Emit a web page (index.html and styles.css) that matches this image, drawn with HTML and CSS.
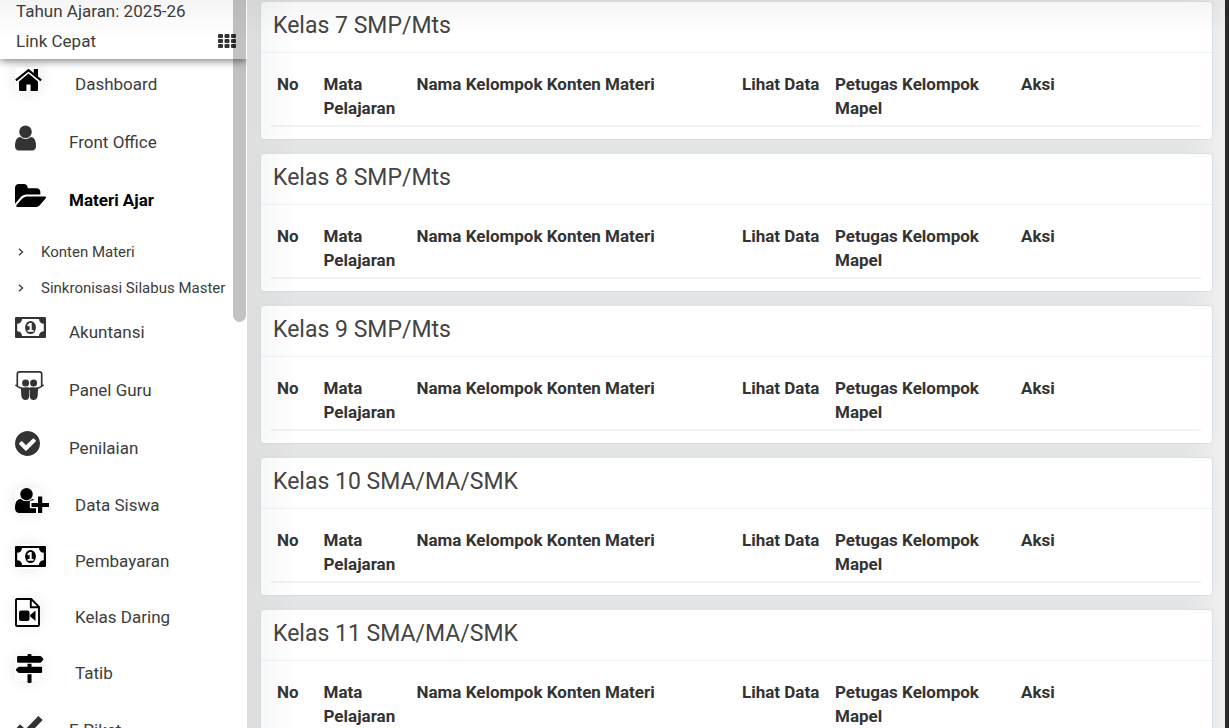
FILE: index.html
```html
<!DOCTYPE html>
<html lang="id">
<head>
<meta charset="utf-8">
<meta name="viewport" content="width=device-width, initial-scale=1">
<title>Materi Ajar</title>
<link rel="stylesheet" href="styles.css">
</head>
<body>
<svg class="defs" aria-hidden="true">
  <symbol id="i-user" viewBox="256 128 1280 1536"><path d="M1536 1399q0 109-62.500 187t-150.500 78h-854q-88 0-150.500-78t-62.500-187q0-85 8.500-160.500t31.500-152 58.500-131 94-89 134.500-34.500q131 128 313 128t313-128q76 0 134.500 34.500t94 89 58.500 131 31.500 152 8.500 160.500zm-256-887q0 159-112.500 271.500t-271.500 112.500-271.500-112.500-112.500-271.500 112.500-271.500 271.500-112.500 271.500 112.500 112.500 271.500z"/></symbol>
  <symbol id="i-money" viewBox="0 0 31 21"><path fill-rule="evenodd" d="M1 0h29a1 1 0 0 1 1 1v19a1 1 0 0 1-1 1H1a1 1 0 0 1-1-1V1a1 1 0 0 1 1-1zM7 2A4.800 4.800 0 0 1 2.200 6.800v7.400A4.800 4.800 0 0 1 7 19h17a4.800 4.800 0 0 1 4.800-4.800V6.800A4.800 4.800 0 0 1 24 2z"/><ellipse cx="15.500" cy="10.500" rx="5.400" ry="6.600"/><path d="M14.500 6h2.200v7h1.900v1.700h-6V13h2V8.700l-1.600.8-.8-1.400z" fill="#fff"/></symbol>
</svg>
<div class="app">
  <aside class="sidebar">
    <header class="side-head">
      <div class="year">Tahun Ajaran: 2025-26</div>
      <div class="quick"><span>Link Cepat</span>
        <button class="grid-btn" type="button" aria-label="Menu link cepat"><svg width="18" height="14" viewBox="0 0 18 14"><g fill="#333"><rect width="5" height="4" rx="1"/><rect x="6.500" width="5" height="4" rx="1"/><rect x="13" width="5" height="4" rx="1"/><rect y="5" width="5" height="4" rx="1"/><rect x="6.500" y="5" width="5" height="4" rx="1"/><rect x="13" y="5" width="5" height="4" rx="1"/><rect y="10" width="5" height="4" rx="1"/><rect x="6.500" y="10" width="5" height="4" rx="1"/><rect x="13" y="10" width="5" height="4" rx="1"/></g></svg></button>
      </div>
    </header>
    <nav class="menu">
      <a class="item boxed first" href="#"><span class="icon"><svg width="27" height="22" viewBox="0 0 27 22"><path d="M13.500 4.500 23 12.600V21a1 1 0 0 1-1 1h-6.400v-6.500h-4.200V22H5a1 1 0 0 1-1-1v-8.400z"/><path d="M.9 11.400 13.500 1.200l12.600 10.200" fill="none" stroke="#000" stroke-width="2.200"/><path d="M18.800 0H23v8l-4.200-3.500z"/></svg></span>Dashboard</a>
      <a class="item" href="#"><span class="icon"><svg width="21" height="26"><use href="#i-user"/></svg></span>Front Office</a>
      <a class="item active" href="#"><span class="icon"><svg width="31" height="23" viewBox="64 128 1879 1408" preserveAspectRatio="none"><path d="M1943 952q0 31-31 66l-336 396q-43 51-120.500 86.500t-143.500 35.500h-1088q-34 0-60.500-13t-26.500-43q0-31 31-66l336-396q43-51 120.500-86.500t143.500-35.500h1088q34 0 60.500 13t26.500 43zm-343-344v160h-832q-94 0-197 47.500t-164 119.500l-337 396-5 6q0-4-.5-12.500t-.5-12.500v-960q0-92 66-158t158-66h320q92 0 158 66t66 158v32h544q92 0 158 66t66 158z"/></svg></span>Materi Ajar</a>
      <div class="submenu">
        <a class="subitem" href="#"><svg width="6" height="8" viewBox="0 0 6 8"><path d="M1 .7 4.600 4 1 7.300" fill="none" stroke="#333" stroke-width="1.200"/></svg>Konten Materi</a>
        <a class="subitem" href="#"><svg width="6" height="8" viewBox="0 0 6 8"><path d="M1 .7 4.600 4 1 7.300" fill="none" stroke="#333" stroke-width="1.200"/></svg>Sinkronisasi Silabus Master</a>
      </div>
      <a class="item" href="#"><span class="icon"><svg width="31" height="21"><use href="#i-money"/></svg></span>Akuntansi</a>
      <a class="item" href="#"><span class="icon"><svg width="29" height="29" viewBox="0 0 29 29"><path d="M2.300 15V3A2.200 2.200 0 0 1 4.500.9h20A2.200 2.200 0 0 1 26.700 3v12" fill="none" stroke="#333" stroke-width="1.700"/><circle cx="10.600" cy="12.100" r="3.500"/><circle cx="18.600" cy="12.100" r="3.500"/><path d="M.4 13.800C4 17.200 8.500 17.800 12 17c1.200-.2 1.900.2 2.500 1 .6-.8 1.300-1.200 2.500-1 3.500.8 8 .2 11.600-3.200" fill="none" stroke="#333" stroke-width="1.600"/><path d="M5.800 16.500c3 1 5.700 0 7.200.5 1 .4 1.200 1.700 1.200 3v4.800c0 2.700-1.200 4.200-3.500 4.200-2.800 0-4.100-1.600-4.400-4.500zM23.200 16.500c-3 1-5.700 0-7.200.5-1 .4-1.200 1.700-1.200 3v4.800c0 2.700 1.200 4.200 3.500 4.200 2.800 0 4.100-1.600 4.400-4.500z"/></svg></span>Panel Guru</a>
      <a class="item" href="#"><span class="icon"><svg width="25" height="25" viewBox="128 128 1536 1536"><path d="M1412 734q0-28-18-46l-91-90q-19-19-45-19t-45 19l-408 407-226-226q-19-19-45-19t-45 19l-91 90q-18 18-18 46 0 27 18 45l362 362q19 19 45 19 27 0 46-19l543-543q18-18 18-45zm252 162q0 209-103 385.500t-279.500 279.500-385.500 103-385.500-103-279.500-279.500-103-385.500 103-385.500 279.500-279.500 385.500-103 385.500 103 279.500 279.500 103 385.500z"/></svg></span>Penilaian</a>
      <a class="item boxed" href="#"><span class="icon"><svg width="34" height="25" viewBox="0 0 34 25"><circle cx="11.500" cy="6.200" r="6.200"/><path d="M6 11c1.600 1.500 3.400 2.200 5.500 2.200S15.400 12.500 17 11c1 0 1.900.3 2.600.9l-4 .9c-.5.200-.8.700-.8 1.200v4.900c0 .8.600 1.400 1.400 1.400h4.800V25H4.500C1.800 25 0 23.200 0 20.300 0 15.500 1.200 11 6 11z"/><path d="M23 8.500h4.200V15H34v4h-6.800v6H23v-6h-6.500v-4H23z"/></svg></span>Data Siswa</a>
      <a class="item boxed" href="#"><span class="icon"><svg width="31" height="21"><use href="#i-money"/></svg></span>Pembayaran</a>
      <a class="item boxed" href="#"><span class="icon"><svg width="25" height="29" viewBox="0 0 25 29"><path d="M2 1h14.200L24 8.800V27a1 1 0 0 1-1 1H2a1 1 0 0 1-1-1V2a1 1 0 0 1 1-1zM15.800 1v8.200H24" fill="none" stroke="#000" stroke-width="1.900"/><rect x="4" y="12.500" width="10.500" height="10.500" rx="2"/><path d="M20.500 12.500v10.500l-5.300-4.500v-1.500z"/></svg></span>Kelas Daring</a>
      <a class="item boxed" href="#"><span class="icon"><svg width="29" height="29" viewBox="0 0 29 29"><path d="M12.500 2V1a1 1 0 0 1 1-1h2a1 1 0 0 1 1 1v1H25c.7 0 1 .3 1.400.7l1.700 1.900c.4.500.4 1 0 1.500L26.400 8c-.4.400-.7.700-1.400.7H3A.9.900 0 0 1 2.100 7.800V2.900C2.100 2.300 2.500 2 3 2zM12.500 9.800h4v3h9.600c.6 0 1 .4 1 .9v4.400c0 .5-.4.900-1 .9H4.200c-.7 0-1-.3-1.400-.7l-1.700-1.800c-.4-.5-.4-1 0-1.500l1.700-1.600c.4-.4.700-.6 1.400-.6h8.300zM12.500 20.200h4V28a1 1 0 0 1-1 1h-2a1 1 0 0 1-1-1z"/></svg></span>Tatib</a>
      <a class="item" href="#"><span class="icon"><svg width="29" height="22" viewBox="0 0 29 22"><path d="m3 11.500 7.500 7L25.500 3" fill="none" stroke="#333" stroke-width="6" stroke-linejoin="round"/></svg></span>E-Piket</a>
    </nav>
    <div class="thumb"></div>
  </aside>
  <main class="content">
    <section class="card"><h2>Kelas 7 SMP/Mts</h2><div class="card-body"><table><thead><tr><th class="w5">No</th><th class="w10">Mata Pelajaran</th><th class="w35">Nama Kelompok Konten Materi</th><th class="w10">Lihat Data</th><th class="w20">Petugas Kelompok Mapel</th><th class="w20">Aksi</th></tr></thead></table></div></section>
    <section class="card"><h2>Kelas 8 SMP/Mts</h2><div class="card-body"><table><thead><tr><th class="w5">No</th><th class="w10">Mata Pelajaran</th><th class="w35">Nama Kelompok Konten Materi</th><th class="w10">Lihat Data</th><th class="w20">Petugas Kelompok Mapel</th><th class="w20">Aksi</th></tr></thead></table></div></section>
    <section class="card"><h2>Kelas 9 SMP/Mts</h2><div class="card-body"><table><thead><tr><th class="w5">No</th><th class="w10">Mata Pelajaran</th><th class="w35">Nama Kelompok Konten Materi</th><th class="w10">Lihat Data</th><th class="w20">Petugas Kelompok Mapel</th><th class="w20">Aksi</th></tr></thead></table></div></section>
    <section class="card"><h2>Kelas 10 SMA/MA/SMK</h2><div class="card-body"><table><thead><tr><th class="w5">No</th><th class="w10">Mata Pelajaran</th><th class="w35">Nama Kelompok Konten Materi</th><th class="w10">Lihat Data</th><th class="w20">Petugas Kelompok Mapel</th><th class="w20">Aksi</th></tr></thead></table></div></section>
    <section class="card"><h2>Kelas 11 SMA/MA/SMK</h2><div class="card-body"><table><thead><tr><th class="w5">No</th><th class="w10">Mata Pelajaran</th><th class="w35">Nama Kelompok Konten Materi</th><th class="w10">Lihat Data</th><th class="w20">Petugas Kelompok Mapel</th><th class="w20">Aksi</th></tr></thead></table></div></section>
  </main>
</div>
</body>
</html>
```
FILE: styles.css
```css
* { box-sizing: border-box; }
body { margin: 0; font-family: Roboto, "Liberation Sans", sans-serif; font-size: 17px; color: #333; background: #292929; }
a { color: inherit; text-decoration: none; }
svg { display: block; flex: none; }
.defs { position: absolute; width: 0; height: 0; }
.app { display: flex; height: 100vh; overflow: hidden; padding-right: 4px; }

/* sidebar */
.sidebar { position: relative; flex: none; width: 247px; background: #fff; color: #3c3c3c; overflow: hidden; }
.side-head { position: relative; display: flex; flex-direction: column; gap: 4px; padding: 0 11px 3px 16px; background: linear-gradient(#f5f5f5, #fff 40px); box-shadow: 0 2px 8px rgba(0, 0, 0, .5); }
.year { line-height: 22px; }
.quick { display: flex; justify-content: space-between; align-items: center; line-height: 30px; }
.grid-btn { padding: 0; border: 0; background: none; cursor: pointer; }
.item { display: flex; align-items: center; height: 58px; padding-left: 15px; fill: #333; white-space: nowrap; }
.item.boxed { height: 56px; fill: #000; }
.item.first { height: 54px; padding-bottom: 4px; }
.item.active { font-weight: 700; color: #000; fill: #000; }
.icon { display: flex; align-items: center; width: 25px; height: 25px; margin: 0 29px 9px 0; }
.boxed .icon { margin-right: 35px; border-radius: 4px; background: #fff; box-shadow: 0 0 14px rgba(0, 0, 0, .1); }
.submenu { display: flex; flex-direction: column; gap: 6px; padding-top: 8px; font-size: 15px; }
.subitem { display: flex; align-items: center; gap: 17px; height: 30px; padding-left: 18px; white-space: nowrap; }
.thumb { position: absolute; top: 0; right: 1px; width: 13px; height: 322px; border-radius: 0 0 7px 7px; background: rgba(0, 0, 0, .24); }

/* content */
.content { position: relative; flex: 1; min-width: 0; overflow: hidden; display: flex; flex-direction: column; gap: 13px; padding: 1px 12px 0 13px; background: linear-gradient(90deg, #e6e7e7, #e6e8e9 50px, #e6e8e9 96%, #f1f1f1); }
.content::before { content: ""; position: absolute; inset: 0; z-index: 1; pointer-events: none; background: linear-gradient(rgba(0, 0, 0, .04), transparent 36px), linear-gradient(90deg, rgba(0, 0, 0, .04), transparent 50px); }
.card { flex: none; border: 1px solid #d9e0e7; border-radius: 4px; background: #fff; box-shadow: 0 0 14px rgba(60, 80, 100, .04); }
.card h2 { margin: 0; padding: 8px 12px 10px; border-bottom: 1px solid #f0f1f2; font-size: 23px; font-weight: 400; line-height: 32px; color: #444; }
.card-body { padding: 13px 11px 12px 10px; }
table { width: 100%; table-layout: fixed; border-collapse: separate; border-spacing: 0; }
th { padding: 6px 6px 5px; border-bottom: 2px solid #f2f2f2; text-align: left; vertical-align: top; font-weight: 700; line-height: 24px; }
.w5 { width: 5%; }
.w10 { width: 10%; }
.w20 { width: 20%; }
.w35 { width: 35%; }
```
